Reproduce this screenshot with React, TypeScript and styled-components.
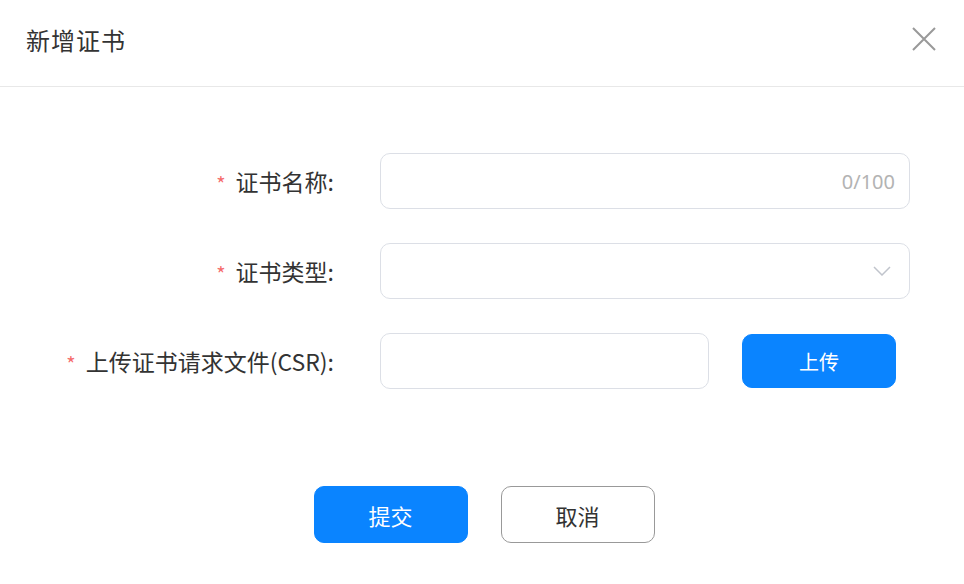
import React from 'react';
import styled, { createGlobalStyle } from 'styled-components';

const GlobalStyle = createGlobalStyle`
  html, body {
    margin: 0;
    padding: 0;
    background: #ffffff;
  }
  body {
    font-family: "Noto Sans CJK SC", "Noto Sans", sans-serif;
    color: #333333;
  }
  * {
    box-sizing: border-box;
  }
`;

const Dialog = styled.div`
  width: 964px;
  height: 584px;
  background: #ffffff;
  display: flex;
  flex-direction: column;
`;

const Header = styled.div`
  height: 87px;
  display: flex;
  align-items: center;
  justify-content: space-between;
  padding: 0 26px 8px 26px;
  border-bottom: 1px solid #e8e8e8;
`;

const Title = styled.h2`
  margin: 0;
  font-size: 24px;
  font-weight: 400;
  color: #333333;
  letter-spacing: 1px;
`;

const CloseButton = styled.button`
  width: 28px;
  height: 28px;
  border: none;
  background: transparent;
  padding: 0;
  display: flex;
  align-items: center;
  justify-content: center;
  cursor: pointer;
  color: #999999;
`;

const Form = styled.form`
  display: flex;
  flex-direction: column;
  gap: 34px;
  padding-top: 66px;
`;

const Row = styled.div`
  display: flex;
  align-items: center;
  height: 56px;
`;

const Label = styled.label`
  width: 334px;
  flex-shrink: 0;
  margin-right: 46px;
  display: flex;
  align-items: center;
  justify-content: flex-end;
  font-size: 23px;
  color: #333333;
  white-space: nowrap;
`;

const Required = styled.span`
  color: #f56c6c;
  font-size: 20px;
  line-height: 1;
  margin-right: 10px;
  padding-top: 5px;
`;

const Field = styled.div<{ $width: number }>`
  position: relative;
  width: ${(p) => p.$width}px;
  height: 56px;
  border: 1px solid #dcdfe6;
  border-radius: 10px;
  background: #ffffff;
  display: flex;
  align-items: center;
  padding: 0 14px 0 16px;
`;

const Input = styled.input`
  flex: 1;
  min-width: 0;
  height: 100%;
  border: none;
  outline: none;
  background: transparent;
  font-family: inherit;
  font-size: 18px;
  color: #333333;
`;

const Counter = styled.span`
  font-size: 20px;
  color: #b3b3b3;
  font-family: "Noto Sans", sans-serif;
`;

const Chevron = styled.span`
  display: flex;
  align-items: center;
  margin-right: 4px;
  color: #c0c4cc;
`;

const Button = styled.button<{ $primary?: boolean; $height?: number; $size?: number }>`
  width: 154px;
  height: ${(p) => p.$height ?? 57}px;
  border-radius: 10px;
  font-family: inherit;
  font-size: ${(p) => p.$size ?? 22}px;
  cursor: pointer;
  border: 1px solid ${(p) => (p.$primary ? '#0a84ff' : '#999999')};
  background: ${(p) => (p.$primary ? '#0a84ff' : '#ffffff')};
  color: ${(p) => (p.$primary ? '#ffffff' : '#333333')};
`;

const UploadButton = styled(Button)`
  margin-left: 33px;
`;

const Footer = styled.div`
  display: flex;
  justify-content: center;
  gap: 33px;
  padding-top: 97px;
  padding-left: 4px;
`;

export default function App() {
  return (
    <>
      <GlobalStyle />
      <Dialog>
        <Header>
          <Title>新增证书</Title>
          <CloseButton type="button" aria-label="关闭">
            <svg width="26" height="26" viewBox="0 0 26 26" fill="none">
              <path d="M2 2L24 24M24 2L2 24" stroke="currentColor" strokeWidth="2" />
            </svg>
          </CloseButton>
        </Header>
        <Form onSubmit={(e) => e.preventDefault()}>
          <Row>
            <Label>
              <Required>*</Required>证书名称:
            </Label>
            <Field $width={530}>
              <Input maxLength={100} />
              <Counter>0/100</Counter>
            </Field>
          </Row>
          <Row>
            <Label>
              <Required>*</Required>证书类型:
            </Label>
            <Field $width={530}>
              <Input readOnly />
              <Chevron>
                <svg width="18" height="10" viewBox="0 0 18 10" fill="none">
                  <path d="M1 1L9 9L17 1" stroke="currentColor" strokeWidth="1.5" />
                </svg>
              </Chevron>
            </Field>
          </Row>
          <Row>
            <Label>
              <Required>*</Required>上传证书请求文件(CSR):
            </Label>
            <Field $width={329}>
              <Input readOnly />
            </Field>
            <UploadButton type="button" $primary $height={54} $size={20}>
              上传
            </UploadButton>
          </Row>
        </Form>
        <Footer>
          <Button type="submit" $primary>
            提交
          </Button>
          <Button type="button">取消</Button>
        </Footer>
      </Dialog>
    </>
  );
}
